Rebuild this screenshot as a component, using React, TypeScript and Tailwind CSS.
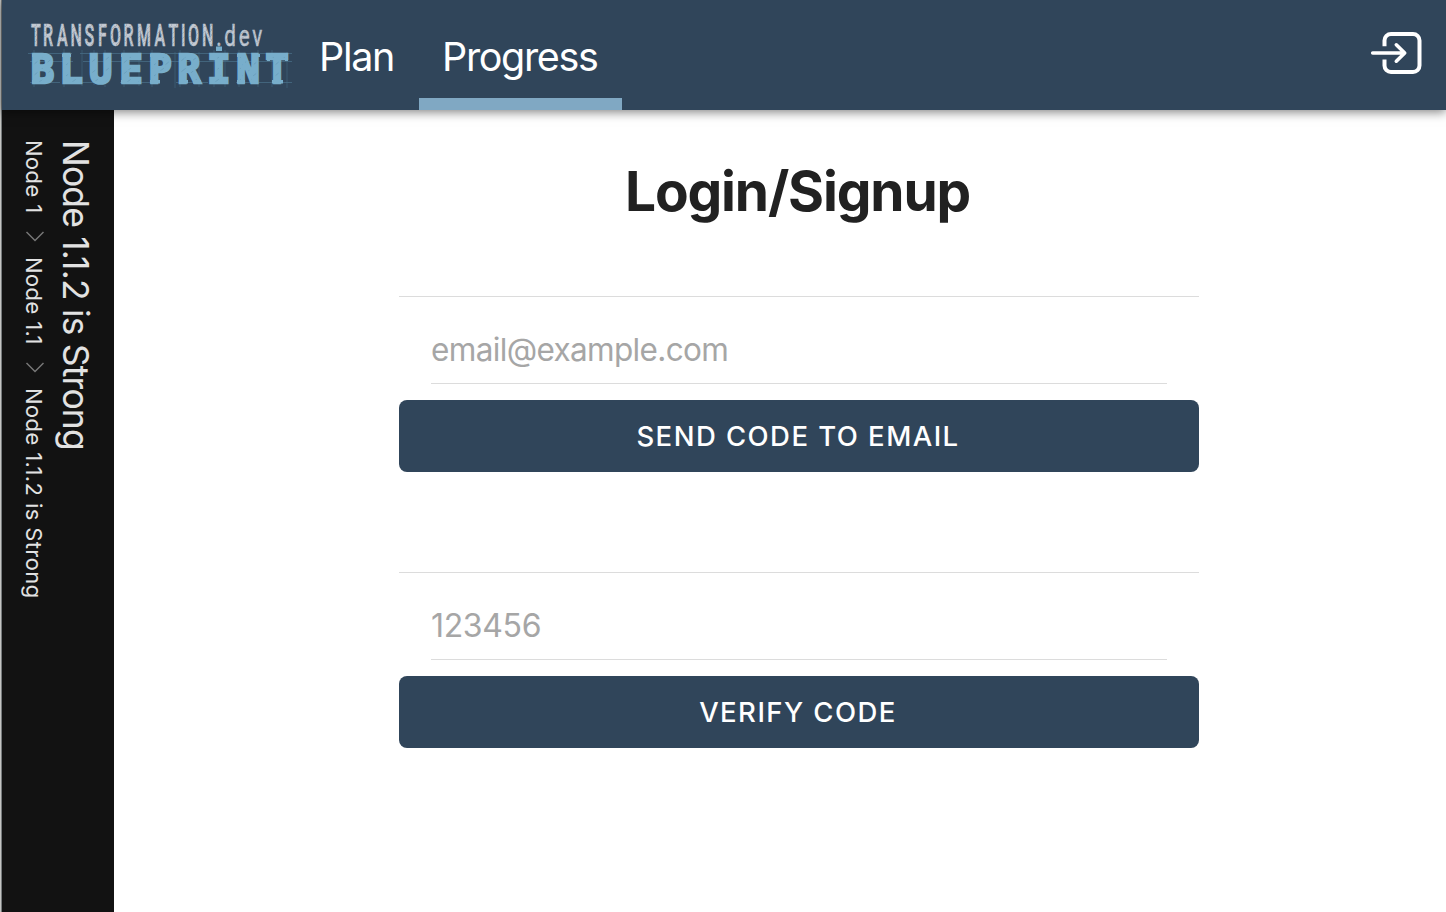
import { Fragment } from 'react';

const crumbs = ['Node 1', 'Node 1.1', 'Node 1.1.2 is Strong'];

function Logo() {
  return (
    <svg className="block h-[80px] w-[270px] shrink-0" viewBox="26 16 270 80" aria-label="TRANSFORMATION.dev BLUEPRINT">
      <defs>
        <pattern id="chalk" width="10" height="5" patternUnits="userSpaceOnUse">
          <rect width="10" height="5" fill="#c3c9d2" />
          <path d="M0 2l4-2M2 5l8-4" stroke="#8d9baa" strokeWidth=".8" />
        </pattern>
        <pattern id="hatch" width="11" height="11" patternUnits="userSpaceOnUse">
          <rect width="11" height="11" fill="#78aecb" />
          <path d="M0 10l10-8" stroke="#5f93b1" strokeWidth=".6" />
        </pattern>
      </defs>
      <g stroke="#54839d" strokeWidth=".8" opacity=".65">
        <path d="M28 53.5h44M80 53.5h80M166 53.5h126M30 61.5h43M83 61.5h72M162 61.5h130M30 82.500h30M64 82.500h40M120 82.500h30M176 82.500h32M236 82.500h56" />
        <path d="M34 50v37M64 49v38M82 50v36M94 50v35M105 50v37M124 50v37M139 51v35M152 50v37M175 52v36M180 50v37M199 52v35M214 50v37M225 50v37M239 50v37M258 50v37M272 50v37M287 52v36" opacity=".7" />
      </g>
      <g fontFamily="Roboto" fontWeight="500" fill="url(#chalk)" stroke="#bcc4ce">
        <text transform="scale(.5 1)" y="46.300" fontSize="32" strokeWidth=".7" x="62 86 114 141 169 196 220 247 274 309 337 362 376 404">TRANSFORMATION</text>
        <text transform="scale(.7 1)" y="46.300" fontSize="29.500" fontWeight="400" strokeWidth=".5" x="309 320.500 341 360.500">.dev</text>
      </g>
      <g fontFamily="DejaVu Sans Mono" fontSize="38.500" fontWeight="700" fill="url(#hatch)" stroke="#78aecb" strokeWidth="2.600">
        <text y="82.700" x="31 59.500 89 119.500 148.500 177.500 207.200 236.500 265.500">BLUEPRINT</text>
      </g>
      <path
        d="M32 54h5v3h-5zM32 80h5v3.500h-5zM62 54h9v3h-9zM121 54h4v3h-4zM121 80h4v3.500h-4zM150 54h5v3h-5zM150 80h10v3.500h-10zM179 54h5v3h-5zM179 80h9v3.500h-9zM193 80h8v3.500h-8zM237 54h6v3h-6zM237 80h8v3.500h-8zM253 54h7v3h-7zM267 54h3v7h-3zM285 54h3v7h-3zM272 80h11v3.500h-11z"
        fill="#78aecb"
      />
      <path d="M216 46.500h6v4.500h-6z" fill="#78aecb" />
    </svg>
  );
}

function LoginIcon() {
  return (
    <svg className="block h-[48px] w-[56px]" viewBox="1368 29 56 48" fill="none" stroke="white" strokeWidth="4">
      <path d="M1384.500 46.300v-5.800a6.500 6.500 0 0 1 6.500-6.500h22a6.500 6.500 0 0 1 6.500 6.500v25a6.500 6.500 0 0 1-6.500 6.500h-22a6.500 6.500 0 0 1-6.500-6.500v-6" />
      <path d="M1372.700 53h31M1396.300 44.800l8.400 8.200-8.400 8.200" strokeWidth="3.600" strokeLinecap="round" strokeLinejoin="round" />
    </svg>
  );
}

function Field({ placeholder, action, tracking }: { placeholder: string; action: string; tracking: string }) {
  return (
    <section className="w-[800px] border-t border-[#dcdcdc]">
      <div className="mx-8 h-[87px] border-b border-[#dcdcdc] pt-[18px]">
        <input
          className={`block h-[68px] w-full bg-transparent text-black outline-none placeholder:text-[#a6a6a6] placeholder:opacity-100 ${tracking}`}
          placeholder={placeholder}
        />
      </div>
      <button className="mt-4 block h-[72px] w-full rounded-lg bg-[#30455a] pt-px pr-[2px] text-[27.5px] font-medium tracking-[1.45px] text-white">
        {action}
      </button>
    </section>
  );
}

export default function App() {
  return (
    <div className="flex h-[912px] w-[1446px] overflow-hidden bg-white font-['Inter',sans-serif]">
      <div className="w-[2px] shrink-0 border-r border-[#777b7c] bg-[#c4c5c2]" />
      <div className="flex min-w-0 flex-1 flex-col">
        <header className="z-10 flex h-[110px] shrink-0 items-stretch bg-[#30455a] shadow-[0_2px_10px_rgba(0,0,0,0.5)]">
          <div className="pt-4 pl-6">
            <Logo />
          </div>
          <nav className="flex text-[39.5px] leading-[48px] text-white">
            <a className="w-[123px] pt-[33px] pl-[23px] tracking-[-1.3px]">Plan</a>
            <a className="w-[203px] border-b-[12px] border-[#80a8c3] pt-[33px] pl-[23px] tracking-[-1.35px]">Progress</a>
          </nav>
          <div className="mr-[22px] ml-auto pt-[29px]">
            <LoginIcon />
          </div>
        </header>
        <div className="flex min-h-0 flex-1">
          <aside className="flex w-[112px] shrink-0 flex-row-reverse bg-[#121212] pt-[30px] text-[#e2e2e2]">
            <h2 className="mr-[17px] text-[35.5px] leading-[44px] tracking-[-0.85px] whitespace-nowrap [writing-mode:vertical-rl]">Node 1.1.2 is Strong</h2>
            <div className="mr-[5px] flex items-center text-[22px] leading-[28px] tracking-[0.4px] whitespace-nowrap [writing-mode:vertical-rl]">
              {crumbs.map((crumb, i) => (
                <Fragment key={crumb}>
                  {i > 0 && (
                    <svg className="mt-[16px] mb-[13.5px] block h-[14px] w-[20px] shrink-0" viewBox="0 0 20 14" fill="none" stroke="#777777" strokeWidth="1.500">
                      <path d="M2.500 2l8.500 8.500 8.500-8.500" />
                    </svg>
                  )}
                  <span>{crumb}</span>
                </Fragment>
              ))}
            </div>
          </aside>
          <main className="flex-1 pl-[285px]">
            <h1 className="mt-[47px] h-[139px] w-[800px] pr-[3px] text-center text-[55px] leading-[68px] font-bold tracking-[-1.15px] text-[#212121]">Login/Signup</h1>
            <div className="flex flex-col gap-[100px]">
              <Field placeholder="email@example.com" action="SEND CODE TO EMAIL" tracking="text-[31.5px] tracking-[-0.65px]" />
              <Field placeholder="123456" action="VERIFY CODE" tracking="text-[32px] tracking-[-0.35px]" />
            </div>
          </main>
        </div>
      </div>
    </div>
  );
}
